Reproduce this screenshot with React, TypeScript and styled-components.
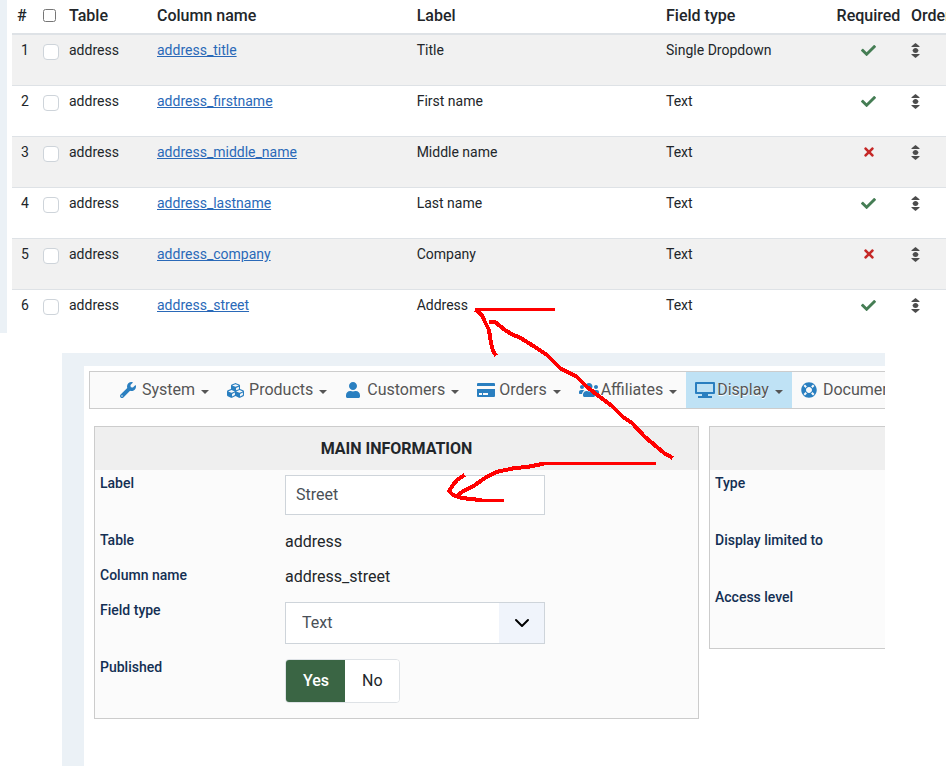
import React from 'react';
import styled, { createGlobalStyle } from 'styled-components';
import { FaCheck, FaCubes, FaLifeRing, FaTimes, FaUser, FaUsers, FaWrench } from 'react-icons/fa';

const GlobalStyle = createGlobalStyle`
  *, *::before, *::after { box-sizing: border-box; }
  body {
    margin: 0;
    background: #fff;
    color: #22262a;
    font-family: Roboto, "Liberation Sans", sans-serif;
    font-size: 14px;
    line-height: 20px;
  }
  button, input, select { font: inherit; color: inherit; }
`;

const Page = styled.div`
  position: relative;
  overflow-x: clip;
  padding-bottom: 12px;
`;

const ListPane = styled.section`
  border-left: 7px solid #ebf1f6;
  padding-left: 5px;
  overflow: hidden;
`;

const FieldTable = styled.table`
  width: 100%;
  table-layout: fixed;
  border-collapse: separate;
  border-spacing: 0;
`;

const Col = styled.col<{ $width?: string }>`
  width: ${(p) => p.$width ?? 'auto'};
`;

const HeadCell = styled.th<{ $center?: boolean }>`
  height: 35px;
  padding: 0 5px 2px;
  border-bottom: 2px solid #dee2e6;
  font-size: 16px;
  font-weight: 500;
  color: #22262a;
  text-align: ${(p) => (p.$center ? 'center' : 'left')};
  white-space: nowrap;
`;

const Row = styled.tr`
  height: 51px;
  &:nth-child(odd) { background: #f1f1f1; }
  &:last-child { height: 43px; background: #fff; }
  &:last-child td { border-bottom: 0; }
`;

const Cell = styled.td<{ $center?: boolean }>`
  padding: 5px;
  border-bottom: 1px solid #dee2e6;
  vertical-align: top;
  text-align: ${(p) => (p.$center ? 'center' : 'left')};
  white-space: nowrap;
`;

const ColumnLink = styled.a`
  color: #2a69b8;
  text-decoration: underline;
`;

const HeadCheckbox = styled.input`
  display: block;
  width: 13px;
  height: 13px;
  margin: 0;
`;

const RowCheckbox = styled.input`
  appearance: none;
  display: block;
  width: 16px;
  height: 16px;
  margin: 4px 0 0;
  border: 1px solid #ced4da;
  border-radius: 4px;
  background: #fff;
`;

const Status = styled.span<{ $ok: boolean }>`
  display: flex;
  justify-content: center;
  align-items: center;
  height: 20px;
  font-size: ${(p) => (p.$ok ? 15 : 14)}px;
  color: ${(p) => (p.$ok ? '#457d54' : '#c52827')};
`;

const SortButton = styled.button`
  display: flex;
  align-items: center;
  height: 20px;
  padding: 0;
  border: 0;
  background: none;
  color: #4c4c4c;
`;

const EditPane = styled.section`
  margin: 20px 61px 0 62px;
  padding: 13px 0 0 22px;
  background: #ebf1f6;
  overflow: hidden;
`;

const EditBody = styled.div`
  padding: 5px 0 47px 5px;
  background: #fff;
`;

const Menu = styled.nav`
  display: flex;
  height: 38px;
  padding-left: 21px;
  border: 1px solid #ccc;
  border-right: 0;
  background: #fafafa;
  overflow: hidden;
`;

const MenuItem = styled.button<{ $active?: boolean }>`
  display: flex;
  flex: none;
  align-items: center;
  padding: 0 9px;
  border: 0;
  background: ${(p) => (p.$active ? '#bfe2f5' : 'transparent')};
  color: #555;
  font-size: 16px;
  text-shadow: 0 1px 0 #fff;
  white-space: nowrap;
`;

const MenuIcon = styled.span`
  display: flex;
  flex: none;
  width: 20px;
  margin-right: 2px;
  color: #2a7fc0;
`;

const Caret = styled.span`
  margin: 3px 0 0 6px;
  border: 4px solid transparent;
  border-top-color: #555;
  border-bottom: 0;
`;

const Panels = styled.div`
  display: grid;
  grid-template-columns: minmax(0, 605fr) minmax(0, 176fr);
  align-items: start;
  gap: 10px;
  padding: 17px 0 0 5px;
`;

const Panel = styled.section<{ $open?: boolean }>`
  border: 1px solid #ccc;
  ${(p) => p.$open && 'border-right: 0;'}
  background: #fbfbfb;
  padding-bottom: 7px;
`;

const PanelTitle = styled.h2`
  height: 43px;
  margin: 0;
  background: #efefef;
  font-size: 16px;
  font-weight: 700;
  line-height: 43px;
  text-align: center;
`;

const FormRow = styled.div<{ $short?: boolean }>`
  display: grid;
  grid-template-columns: 185px minmax(0, 260px);
  min-height: ${(p) => (p.$short ? 35 : 57)}px;
  padding: 5px;
`;

const labelStyle = `
  color: #132f53;
  font-weight: 500;
  line-height: 16px;
`;
const Label = styled.label`${labelStyle}`;
const Caption = styled.span`${labelStyle} white-space: nowrap;`;

const Value = styled.span`
  font-size: 16px;
`;

const TextBox = styled.input`
  width: 100%;
  height: 40px;
  padding: 0 10px 2px;
  border: 1px solid #ced4da;
  border-radius: 0;
  background: #fff;
  color: #495057;
  font-size: 16px;
`;

const SelectWrap = styled.div`
  display: grid;
  grid-template-columns: 1fr 46px;
  height: 42px;
`;

const Select = styled.select`
  appearance: none;
  grid-area: 1 / 1 / 2 / 3;
  width: 100%;
  height: 42px;
  padding: 0 16px;
  border: 1px solid #ced4da;
  border-radius: 0;
  background: #fff;
  color: #495057;
  font-size: 16px;
`;

const SelectArrow = styled.span`
  grid-area: 1 / 2 / 2 / 3;
  display: flex;
  align-items: center;
  justify-content: center;
  margin: 1px 1px 1px 0;
  background: #f0f4fb;
  color: #000;
  pointer-events: none;
`;

const Switch = styled.div`
  display: flex;
  justify-self: start;
  height: 44px;
  border: 1px solid #dee2e6;
  border-radius: 4px;
  background: #fff;
  overflow: hidden;
`;

const Choice = styled.label<{ $on?: boolean }>`
  display: flex;
  align-items: center;
  padding: 0 16px 0 17px;
  background: ${(p) => (p.$on ? '#3a6544' : '#fff')};
  color: ${(p) => (p.$on ? '#fff' : '#22262a')};
  font-size: 16px;
  font-weight: ${(p) => (p.$on ? 500 : 400)};
`;

const HiddenRadio = styled.input`
  appearance: none;
  width: 0;
  height: 0;
  margin: 0;
`;

const Marks = styled.svg`
  position: absolute;
  top: 0;
  left: 0;
  pointer-events: none;
`;

const SortIcon = () => (
  <svg width="9" height="15" viewBox="0 0 9 15" fill="currentColor" aria-hidden="true">
    <path d="M4.5 0 8.500 3.200Q9 4 8 4H1Q0 4 .5 3.200Z" />
    <circle cx="4.5" cy="7.500" r="2.500" />
    <rect x="1.500" y="6.500" width="6" height="2" rx="1" />
    <path d="M4.5 15 8.500 11.800Q9 11 8 11H1Q0 11 .5 11.800Z" />
  </svg>
);

const CardIcon = () => (
  <svg width="18" height="14" viewBox="0 0 18 14" fill="currentColor" aria-hidden="true">
    <path d="M1 0h16a1 1 0 0 1 1 1v2H0V1a1 1 0 0 1 1-1Z" />
    <path fillRule="evenodd" d="M0 6h18v7a1 1 0 0 1-1 1H1a1 1 0 0 1-1-1ZM2 10v2h3v-2ZM6 10v2h5v-2Z" />
  </svg>
);

const MonitorIcon = () => (
  <svg width="20" height="16" viewBox="0 0 20 16" fill="currentColor" aria-hidden="true">
    <path fillRule="evenodd" d="M1 0h18a1 1 0 0 1 1 1v10a1 1 0 0 1-1 1H1a1 1 0 0 1-1-1V1a1 1 0 0 1 1-1ZM2 2v8h16V2Z" />
    <path d="M7 12h6v2h4v2H3v-2h4Z" />
  </svg>
);

const ChevronIcon = () => (
  <svg width="16" height="10" viewBox="0 0 16 10" fill="none" stroke="currentColor" strokeWidth="2" strokeLinecap="round" strokeLinejoin="round" aria-hidden="true">
    <path d="M2 2l6 6 6-6" />
  </svg>
);

const fields = [
  { column: 'address_title', label: 'Title', type: 'Single Dropdown', required: true },
  { column: 'address_firstname', label: 'First name', type: 'Text', required: true },
  { column: 'address_middle_name', label: 'Middle name', type: 'Text', required: false },
  { column: 'address_lastname', label: 'Last name', type: 'Text', required: true },
  { column: 'address_company', label: 'Company', type: 'Text', required: false },
  { column: 'address_street', label: 'Address', type: 'Text', required: true },
];

const menu = [
  { name: 'System', icon: <FaWrench size={16} /> },
  { name: 'Products', icon: <FaCubes size={17} /> },
  { name: 'Customers', icon: <FaUser size={16} /> },
  { name: 'Orders', icon: <CardIcon /> },
  { name: 'Affiliates', icon: <FaUsers size={20} /> },
  { name: 'Display', icon: <MonitorIcon />, active: true },
  { name: 'Documentation', icon: <FaLifeRing size={16} /> },
];

export default function App() {
  const [published, setPublished] = React.useState(true);
  return (
    <Page>
      <GlobalStyle />
      <ListPane>
        <FieldTable>
          <colgroup>
            <Col $width="26px" />
            <Col $width="26px" />
            <Col $width="88px" />
            <Col $width="27.8%" />
            <Col $width="26.7%" />
            <Col />
            <Col $width="75px" />
            <Col $width="40px" />
          </colgroup>
          <thead>
            <tr>
              <HeadCell>#</HeadCell>
              <HeadCell><HeadCheckbox type="checkbox" aria-label="Select all" /></HeadCell>
              <HeadCell>Table</HeadCell>
              <HeadCell>Column name</HeadCell>
              <HeadCell>Label</HeadCell>
              <HeadCell>Field type</HeadCell>
              <HeadCell $center>Required</HeadCell>
              <HeadCell>Ordering</HeadCell>
            </tr>
          </thead>
          <tbody>
            {fields.map((f, i) => (
              <Row key={f.column}>
                <Cell $center>{i + 1}</Cell>
                <Cell><RowCheckbox type="checkbox" aria-label={`Select ${f.column}`} /></Cell>
                <Cell>address</Cell>
                <Cell><ColumnLink href="#edit">{f.column}</ColumnLink></Cell>
                <Cell>{f.label}</Cell>
                <Cell>{f.type}</Cell>
                <Cell $center>
                  <Status $ok={f.required} role="img" aria-label={f.required ? 'Yes' : 'No'}>
                    {f.required ? <FaCheck /> : <FaTimes />}
                  </Status>
                </Cell>
                <Cell><SortButton type="button" aria-label="Reorder"><SortIcon /></SortButton></Cell>
              </Row>
            ))}
          </tbody>
        </FieldTable>
      </ListPane>

      <EditPane id="edit">
        <EditBody>
          <Menu>
            {menu.map((m) => (
              <MenuItem key={m.name} type="button" $active={m.active}>
                <MenuIcon>{m.icon}</MenuIcon>
                {m.name}
                <Caret />
              </MenuItem>
            ))}
          </Menu>
          <Panels>
            <Panel>
              <PanelTitle>MAIN INFORMATION</PanelTitle>
              <FormRow>
                <Label htmlFor="label">Label</Label>
                <TextBox id="label" type="text" defaultValue="Street" />
              </FormRow>
              <FormRow $short>
                <Caption>Table</Caption>
                <Value>address</Value>
              </FormRow>
              <FormRow $short>
                <Caption>Column name</Caption>
                <Value>address_street</Value>
              </FormRow>
              <FormRow>
                <Label htmlFor="type">Field type</Label>
                <SelectWrap>
                  <Select id="type" defaultValue="Text">
                    <option>Text</option>
                    <option>Single Dropdown</option>
                  </Select>
                  <SelectArrow><ChevronIcon /></SelectArrow>
                </SelectWrap>
              </FormRow>
              <FormRow>
                <Caption id="published">Published</Caption>
                <Switch role="radiogroup" aria-labelledby="published">
                  <Choice $on={published}>
                    <HiddenRadio type="radio" name="published" checked={published} onChange={() => setPublished(true)} />
                    Yes
                  </Choice>
                  <Choice $on={!published}>
                    <HiddenRadio type="radio" name="published" checked={!published} onChange={() => setPublished(false)} />
                    No
                  </Choice>
                </Switch>
              </FormRow>
            </Panel>
            <Panel $open>
              <PanelTitle />
              <FormRow><Caption>Type</Caption></FormRow>
              <FormRow><Caption>Display limited to</Caption></FormRow>
              <FormRow><Caption>Access level</Caption></FormRow>
            </Panel>
          </Panels>
        </EditBody>
      </EditPane>

      <Marks width="946" height="766" viewBox="0 0 946 766" fill="none" stroke="#f00" strokeWidth="4" strokeLinecap="square" strokeLinejoin="round" shapeRendering="crispEdges" aria-hidden="true">
        <path strokeWidth="3" d="M476 309.500H553" />
        <path strokeWidth="3" d="M654 463.500H542" />
        <path strokeWidth="3" d="M502 500.500H480" />
        <path d="M477 311L482 315L484 320L487 326L489 330L491 343L493 351L495 354" />
        <path d="M491 322L495 322L505 330L513 335L519 337L535 347L547 355L560 368L577 377L587 387L600 397L612 406L623 417L632 423L645 437L657 447L664 453L671 457" />
        <path d="M542 464L527 467L515 468L496 472L485 478L475 485L462 492L458 495" />
        <path d="M463 476L457 480L453 485L449 491L453 495L462 498L480 500" />
      </Marks>
    </Page>
  );
}
